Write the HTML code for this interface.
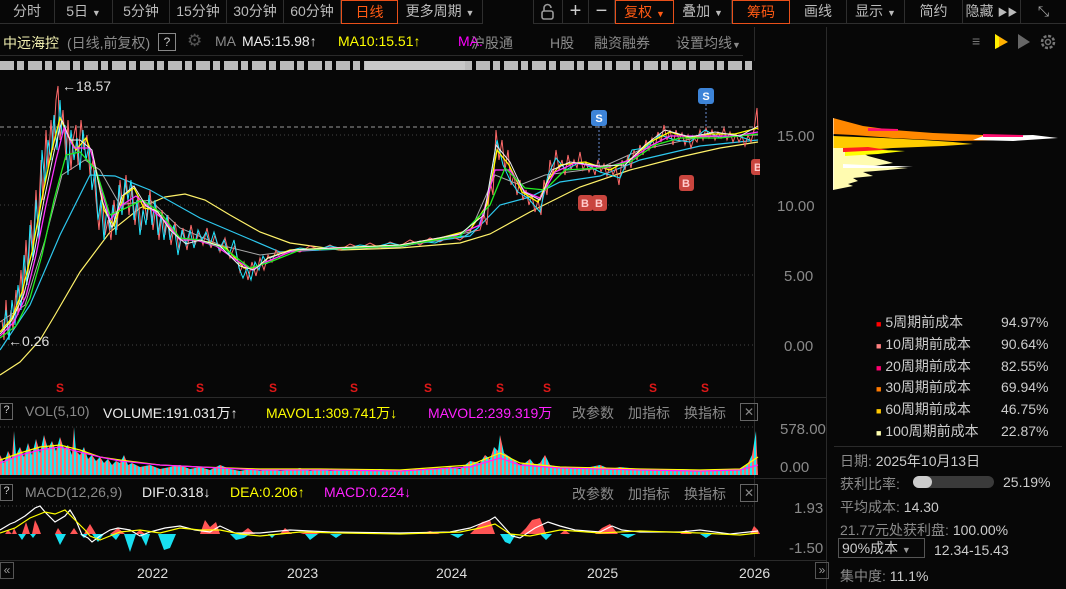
<!DOCTYPE html>
<html><head><meta charset="utf-8"><style>
*{margin:0;padding:0;box-sizing:border-box}
body{width:1066px;height:589px;background:#070707;color:#bbb;font-family:"Liberation Sans","Noto Sans CJK SC",sans-serif;font-size:14px;position:relative;overflow:hidden}
.a{position:absolute;white-space:nowrap}
.tb{position:absolute;top:0;height:24px;border-right:1px solid #2e2e2e;border-bottom:1px solid #2e2e2e;text-align:center;line-height:23px;color:#bbb;font-size:14px}
.on{border:1px solid #e8501a;color:#ff5a14}
.g{color:#8a8a8a}
.rp{color:#ccc;font-size:14px}
.lg div{height:21.8px;line-height:21.8px;overflow:visible}
</style></head><body>
<div class="tb" style="left:0;width:55px">分时</div>
<div class="tb" style="left:55px;width:58px">5日 <span style="font-size:9px">▼</span></div>
<div class="tb" style="left:113px;width:57px">5分钟</div>
<div class="tb" style="left:170px;width:57px">15分钟</div>
<div class="tb" style="left:227px;width:57px">30分钟</div>
<div class="tb" style="left:284px;width:57px">60分钟</div>
<div class="tb on" style="left:341px;width:57px">日线</div>
<div class="tb" style="left:398px;width:85px">更多周期 <span style="font-size:9px">▼</span></div>
<div class="tb" style="left:533px;width:30px;border-left:1px solid #2e2e2e"><svg width="18" height="18" viewBox="0 0 18 18" style="margin-top:3px"><rect x="3" y="8" width="11" height="8" rx="2" fill="none" stroke="#999" stroke-width="1.6"/><path d="M5 8V5a3.5 3.5 0 0 1 7 0" fill="none" stroke="#999" stroke-width="1.6"/></svg></div>
<div class="tb" style="left:563px;width:26px;font-size:20px;color:#ccc">+</div>
<div class="tb" style="left:589px;width:26px;font-size:20px;color:#ccc">−</div>
<div class="tb on" style="left:615px;width:59px">复权 <span style="font-size:9px">▼</span></div>
<div class="tb" style="left:674px;width:58px">叠加 <span style="font-size:9px">▼</span></div>
<div class="tb on" style="left:732px;width:58px">筹码</div>
<div class="tb" style="left:790px;width:57px">画线</div>
<div class="tb" style="left:847px;width:58px">显示 <span style="font-size:9px">▼</span></div>
<div class="tb" style="left:905px;width:58px">简约</div>
<div class="tb" style="left:963px;width:58px">隐藏 <span style="font-size:10px">▶▶</span></div>
<div class="tb" style="left:1021px;width:45px;border-right:none;color:#aaa">⤡</div>

<div class="a" style="left:3px;top:33px;color:#f2f0b0">中远海控</div>
<div class="a g" style="left:67px;top:33px">(日线,前复权)</div>
<div class="a" style="left:158px;top:33px;width:18px;height:18px;border:1px solid #888;color:#ccc;font-size:12px;text-align:center;line-height:16px">?</div>
<div class="a" style="left:187px;top:31px;color:#555;font-size:17px">⚙</div>
<div class="a g" style="left:215px;top:33px">MA</div>
<div class="a" style="left:242px;top:33px;color:#eee">MA5:15.98↑</div>
<div class="a" style="left:338px;top:33px;color:#ffff00">MA10:15.51↑</div>
<div class="a" style="left:458px;top:33px;color:#ff00ff">MA.</div>
<div class="a g" style="left:471px;top:33px">沪股通</div>
<div class="a g" style="left:550px;top:33px">H股</div>
<div class="a g" style="left:594px;top:33px">融资融券</div>
<div class="a g" style="left:676px;top:33px">设置均线<span style="font-size:9px">▼</span></div>
<div class="a" style="left:0;top:55px;width:743px;height:1px;background:#2a2a2a"></div>
<div class="a" style="left:754px;top:27px;width:1px;height:530px;background:#2a2a2a"></div>
<div class="a" style="left:826px;top:27px;width:1px;height:562px;background:#2a2a2a"></div>
<div class="a" style="left:0;top:61px;width:755px;height:9px;background:repeating-linear-gradient(90deg,#bbb 0 14px,#070707 14px 17px,#bbb 17px 24px,#070707 24px 28px)"></div>
<div class="a" style="left:365px;top:61px;width:100px;height:9px;background:#c8c8c8"></div>
<div class="a" style="left:972px;top:33px;color:#777;font-size:14px">≡</div>
<svg class="a" style="left:990px;top:31px" width="70" height="20"><polygon points="5,3 18,11 5,18" fill="#ffb000"/><polygon points="5,3 9,6 9,16 5,18" fill="#ffee00"/><polygon points="28,3 40,11 28,18" fill="#666"/><circle cx="58" cy="11" r="6" fill="none" stroke="#777" stroke-width="2.5" stroke-dasharray="3 1.7"/><circle cx="58" cy="11" r="2.5" fill="none" stroke="#777" stroke-width="1.5"/></svg>

<svg class="a" style="left:0;top:75px" width="760" height="320" viewBox="0 75 760 320">
<g stroke="#444" stroke-dasharray="1 3"><line x1="0" y1="135" x2="754" y2="135"/><line x1="0" y1="205" x2="754" y2="205"/><line x1="0" y1="275" x2="754" y2="275"/><line x1="0" y1="345" x2="754" y2="345"/></g>
<line x1="0" y1="127" x2="754" y2="127" stroke="#999" stroke-dasharray="4 3"/>
<polyline fill="none" stroke="#fff26a" stroke-width="1.2" points="0,375 20,362 40,340 55,315 80,272 110,232 140,208 165,197 185,194 205,200 230,215 260,232 290,243 340,250 400,248 460,243 490,234 530,212 580,187 630,170 680,157 720,148 758,142"/>
<polyline fill="none" stroke="#2ec8ee" stroke-width="1.2" points="0,350 30,305 60,235 90,175 115,176 150,190 200,218 240,235 280,252 320,250 400,246 470,236 500,205 530,197 560,182 600,176 640,160 700,146 758,140"/>
<polyline fill="none" stroke="#aaa" stroke-width="1" points="0,322 25,305 45,240 62,175 85,160 100,170 120,205 150,200 180,228 220,245 260,255 300,250 400,247 470,232 495,175 520,185 545,175 600,168 640,150 700,137 758,135"/>
<polyline fill="none" stroke="#ff6a6a" stroke-width="1" points="2,320 4,340 6,300 8,335 11,310 13,330 16,290 18,315 21,270 23,300 26,240 28,275 31,220 33,250 36,190 38,230 41,160 43,200 46,130 48,170 51,120 53,150 56,100 58,86 60,140 63,110 66,160 68,120 71,170 73,140 76,125 78,165 81,120 84,150 87,135 90,175 93,160 96,200 99,230 102,190 105,235 108,220 111,240 114,200 117,230 120,180 123,210 126,175 129,215 132,185 135,225 138,195 141,230 144,200 147,220 150,190 153,230 156,205 159,240 162,210 165,235 168,215 171,245 175,222 179,250 183,228 187,250 191,225 195,245 199,232 203,245 207,228 211,248 215,235 220,252 225,238 230,258 235,245 240,272 244,262 248,280 252,262 256,276 260,258 264,270 268,255 272,262 276,250 280,258"/>
<polyline fill="none" stroke="#22e6ff" stroke-width="1" points="3,330 6,310 9,340 12,300 15,325 18,285 21,310 24,255 27,285 30,225 33,260 36,200 39,240 42,150 45,185 48,140 51,160 54,115 57,150 60,100 62,135 65,125 68,175 71,130 74,160 77,138 80,170 83,130 86,160 89,145 92,190 95,170 98,220 101,200 104,240 107,205 110,230 113,205 116,235 119,185 122,215 125,180 128,200 131,180 134,220 137,200 140,235 143,210 146,225 149,195 152,225 155,200 158,235 161,215 164,240 167,215 170,240 174,225 178,255 182,230 186,245 190,230 194,248 198,230 202,240 206,232 210,245 214,232 219,250 224,240 229,255 234,240 239,268 243,278 247,268 251,280 255,262 259,270 263,256 267,264"/>
<polyline fill="none" stroke="#ff6a6a" stroke-width="1" points="280,256 290,250 300,252 310,246 320,250 330,245 340,250 350,244 360,248 370,243 380,248 390,242 400,246 410,240 420,245 430,238 440,242 450,236 460,240 470,232 480,230 484,215 487,225 490,180 493,195 496,130 499,160 502,140 505,170 508,150 511,185 514,175 517,195 520,180 523,200 526,190 529,205 532,195 535,212 538,200 541,215 544,180 547,195 550,160 553,175 556,150 559,170 562,160 565,175 568,155 571,170 574,160 577,168 580,152 583,170 586,162 589,172 592,165 595,175 598,160 601,172 604,164 607,176 610,165 613,175 616,168 619,185 622,160 625,170 628,155 631,168 634,150 637,160 640,145 643,155 646,140 649,150 652,138 655,148 658,132 661,142 664,125 667,140 670,130 673,145 676,130 679,140 682,133 685,145 688,135 691,148 694,138 697,142 700,130 703,140 706,128 709,138 712,130 715,140 718,132 721,138 724,128 727,140 730,132 733,142 736,134 739,142 742,136 745,146 748,135 751,142 754,130 757,108 758,130"/>
<polyline fill="none" stroke="#22e6ff" stroke-width="1" points="270,258 285,252 300,248 315,250 330,246 345,249 360,245 375,247 390,243 405,246 420,241 435,243 450,237 465,236 478,228 486,205 492,170 497,140 503,165 510,180 518,192 528,198 540,212 548,175 556,158 566,170 580,162 600,172 620,178 632,150 645,148 660,135 675,140 690,142 705,130 720,138 735,135 750,140"/>
<g fill="none" stroke-width="1.3">
<polyline stroke="#ffff00" points="0,332 12,318 22,292 32,252 42,198 52,150 60,118 68,135 76,150 86,138 94,160 104,210 114,226 124,195 134,188 144,208 156,210 168,226 180,240 192,240 208,242 226,248 244,268 256,268 268,258 290,250 330,248 400,245 440,238 470,230 487,205 497,150 509,165 522,192 538,202 548,180 560,165 585,162 610,170 632,158 650,142 670,132 690,138 710,134 735,134 758,128"/>
<polyline stroke="#ff33ff" points="0,336 14,322 26,296 36,255 46,205 56,160 64,128 74,148 90,148 100,185 110,220 122,205 136,196 150,208 166,222 180,240 196,240 216,246 236,260 252,270 266,262 290,252 330,248 400,246 450,238 480,225 495,170 510,170 525,192 540,198 555,172 575,163 605,168 630,160 650,146 670,136 700,136 735,136 758,132"/>
<polyline stroke="#22ee22" points="0,338 16,326 30,298 42,255 54,200 66,155 80,152 96,170 110,215 126,208 142,200 160,212 180,238 200,240 224,248 250,268 270,262 300,250 400,246 460,236 490,205 505,168 525,188 545,190 565,170 600,168 630,162 655,145 680,138 720,138 758,134"/>
<polyline stroke="#eee" stroke-width="1" points="0,334 12,320 24,294 34,254 44,200 54,152 62,120 70,140 80,140 92,150 102,200 112,228 122,196 134,186 146,206 158,212 170,230 186,244 200,240 220,246 240,266 254,270 268,258 292,250 400,245 460,234 484,215 496,145 510,162 524,192 540,200 552,170 570,162 600,166 625,165 645,145 665,130 690,137 715,132 740,136 758,126"/>
</g>
<text x="62" y="91" fill="#ddd" font-size="14" font-family="Liberation Sans">←18.57</text>
<text x="8" y="346" fill="#ddd" font-size="14" font-family="Liberation Sans">←0.26</text>
<g fill="#e01818" font-size="12" font-weight="bold" font-family="Liberation Sans"><text x="56" y="392">S</text><text x="196" y="392">S</text><text x="269" y="392">S</text><text x="350" y="392">S</text><text x="424" y="392">S</text><text x="496" y="392">S</text><text x="543" y="392">S</text><text x="649" y="392">S</text><text x="701" y="392">S</text></g>
<g stroke="#6a8ed0" stroke-dasharray="2 2"><line x1="599" y1="126" x2="599" y2="165"/><line x1="706" y1="104" x2="706" y2="128"/></g>
<g font-size="11" font-weight="bold" font-family="Liberation Sans" text-anchor="middle">
<rect x="591" y="110" width="16" height="16" rx="3" fill="#3d84d8"/><text x="599" y="122" fill="#fff">S</text>
<rect x="698" y="88" width="16" height="16" rx="3" fill="#3d84d8"/><text x="706" y="100" fill="#fff">S</text>
<rect x="578" y="195" width="15" height="16" rx="3" fill="#c9453e"/><text x="585" y="207" fill="#fcc">B</text>
<rect x="592" y="195" width="15" height="16" rx="3" fill="#c9453e"/><text x="599" y="207" fill="#fcc">B</text>
<rect x="679" y="175" width="15" height="16" rx="3" fill="#c9453e"/><text x="686" y="187" fill="#fcc">B</text>
<rect x="751" y="159" width="15" height="16" rx="3" fill="#c9453e"/><text x="758" y="171" fill="#fcc">B</text>
</g>
</svg>
<div class="a g" style="left:777px;top:128px;font-size:15px">15.00</div>
<div class="a g" style="left:777px;top:198px;font-size:15px">10.00</div>
<div class="a g" style="left:784px;top:268px;font-size:15px">5.00</div>
<div class="a g" style="left:784px;top:338px;font-size:15px">0.00</div>
<svg class="a" style="left:833px;top:118px" width="233" height="75">
<polygon fill="#fffbb0" points="0,28 20,30 35,38 50,42 60,45 40,48 75,50 55,52 30,54 40,58 20,60 25,63 15,66 20,68 10,70 0,72"/>
<polygon fill="#ffcc00" points="0,18 50,20 90,22 120,24 140,26 110,28 60,30 30,32 15,30 0,30"/>
<polygon fill="#ff8800" points="0,0 15,4 30,8 60,12 100,15 150,17 200,19 180,22 120,23 60,20 20,17 0,16"/>
<polygon fill="#fff" points="150,18 200,17 225,20 180,23 140,22"/>
<polygon fill="#ff1070" points="35,10 65,11 65,13 35,13"/><polygon fill="#ff1070" points="150,16 190,17 190,19 150,19"/>
<polygon fill="#ff2020" points="10,30 35,29 55,32 30,34 10,34"/>
<polygon fill="#ffff00" points="12,34 50,32 72,33 45,36 12,38"/>
<polygon fill="#fff" points="10,46 50,48 80,48 50,50 10,50"/>
<line x1="0" y1="0" x2="0" y2="72" stroke="#fff"/>
</svg>
<div class="a rp lg" style="left:876px;top:312px">
<div><span style="color:#f00;font-size:9px">■</span> 5周期前成本</div>
<div><span style="color:#ff8080;font-size:9px">■</span> 10周期前成本</div>
<div><span style="color:#ff0070;font-size:9px">■</span> 20周期前成本</div>
<div><span style="color:#ff7a00;font-size:9px">■</span> 30周期前成本</div>
<div><span style="color:#ffc800;font-size:9px">■</span> 60周期前成本</div>
<div><span style="color:#ffffb0;font-size:9px">■</span> 100周期前成本</div>
</div>
<div class="a rp lg" style="left:1001px;top:312px"><div>94.97%</div><div>90.64%</div><div>82.55%</div><div>69.94%</div><div>46.75%</div><div>22.87%</div></div>
<div class="a" style="left:834px;top:446px;width:228px;height:1px;background:#2a2a2a"></div>
<div class="a rp" style="left:840px;top:451px"><span class="g">日期:</span> 2025年10月13日</div>
<div class="a rp" style="left:840px;top:474px"><span class="g">获利比率:</span></div>
<div class="a" style="left:913px;top:476px;width:81px;height:12px;border-radius:6px;background:#3a3a3a"></div>
<div class="a" style="left:913px;top:476px;width:19px;height:12px;border-radius:6px;background:#ccc"></div>
<div class="a rp" style="left:1003px;top:474px">25.19%</div>
<div class="a rp" style="left:840px;top:497px"><span class="g">平均成本:</span> 14.30</div>
<div class="a rp" style="left:840px;top:520px"><span class="g">21.77元处获利盘:</span> 100.00%</div>
<div class="a rp" style="left:838px;top:538px;width:87px;height:20px;border:1px solid #555;padding-left:3px;line-height:18px">90%成本 <span style="font-size:9px;color:#999">▼</span></div>
<div class="a rp" style="left:934px;top:542px">12.34-15.43</div>
<div class="a rp" style="left:840px;top:566px"><span class="g">集中度:</span> 11.1%</div>

<div class="a" style="left:0;top:397px;width:826px;height:1px;background:#2a2a2a"></div>
<div class="a" style="left:0;top:403px;width:13px;height:17px;border:1px solid #666;color:#ccc;font-size:11px;text-align:center">?</div>
<div class="a g" style="left:25px;top:403px">VOL(5,10)</div>
<div class="a" style="left:103px;top:403px;color:#eee">VOLUME:191.031万↑</div>
<div class="a" style="left:266px;top:403px;color:#ffff00">MAVOL1:309.741万↓</div>
<div class="a" style="left:428px;top:403px;color:#ff22ff">MAVOL2:239.319万</div>
<div class="a g" style="left:572px;top:403px">改参数</div>
<div class="a g" style="left:628px;top:403px">加指标</div>
<div class="a g" style="left:684px;top:403px">换指标</div>
<div class="a" style="left:740px;top:403px;width:18px;height:18px;border:1px solid #666;color:#888;font-size:12px;text-align:center;line-height:16px">✕</div>
<div class="a g" style="left:780px;top:421px;font-size:15px">578.00</div>
<div class="a g" style="left:780px;top:459px;font-size:15px">0.00</div>
<svg class="a" style="left:0;top:425px" width="760" height="52">
<defs><pattern id="st" width="4" height="52" patternUnits="userSpaceOnUse"><rect width="2" height="52" fill="#ff6d6d"/><rect x="2" width="2" height="52" fill="#1ee8f0"/></pattern></defs>
<line x1="0" y1="2" x2="754" y2="2" stroke="#444" stroke-dasharray="1 3"/>
<polygon fill="url(#st)" points="0,50 0,30 4,38 8,26 12,34 14,6 16,30 20,22 24,32 28,18 32,30 36,14 40,28 44,10 48,24 52,16 56,26 60,12 64,24 68,20 72,30 74,2 76,26 80,30 84,22 88,34 92,30 96,36 100,32 104,38 108,34 112,40 116,36 120,38 124,30 128,40 132,38 140,42 150,40 160,44 170,42 180,40 190,44 200,42 210,45 220,40 230,44 240,46 250,44 260,46 270,44 280,46 290,45 300,43 310,46 320,44 330,46 340,45 360,46 380,44 400,46 420,45 440,44 450,42 460,44 470,36 480,38 485,30 490,34 494,22 498,26 500,10 504,28 510,32 515,36 520,40 525,38 530,34 535,40 540,38 545,30 550,40 560,42 580,44 600,40 610,44 620,42 640,44 660,45 680,44 700,45 720,44 740,44 748,38 752,30 756,6 758,50"/>
<polyline fill="none" stroke="#ffff00" stroke-width="1.2" points="0,35 20,28 40,22 60,20 80,25 100,32 120,35 160,40 200,42 260,44 320,44 400,45 470,40 500,28 520,38 560,42 640,44 700,45 740,44 758,32"/>
<polyline fill="none" stroke="#ff22ff" stroke-width="1.2" points="0,38 20,30 40,25 60,22 80,27 100,32 120,36 160,40 200,42 260,45 320,45 400,46 470,42 500,33 520,40 560,43 640,45 700,46 740,45 758,40"/>
</svg>
<div class="a" style="left:0;top:478px;width:826px;height:1px;background:#2a2a2a"></div>
<div class="a" style="left:0;top:484px;width:13px;height:17px;border:1px solid #666;color:#ccc;font-size:11px;text-align:center">?</div>
<div class="a g" style="left:25px;top:484px">MACD(12,26,9)</div>
<div class="a" style="left:142px;top:484px;color:#eee">DIF:0.318↓</div>
<div class="a" style="left:230px;top:484px;color:#ffff00">DEA:0.206↑</div>
<div class="a" style="left:324px;top:484px;color:#ff22ff">MACD:0.224↓</div>
<div class="a g" style="left:572px;top:484px">改参数</div>
<div class="a g" style="left:628px;top:484px">加指标</div>
<div class="a g" style="left:684px;top:484px">换指标</div>
<div class="a" style="left:740px;top:484px;width:18px;height:18px;border:1px solid #666;color:#888;font-size:12px;text-align:center;line-height:16px">✕</div>
<div class="a g" style="left:794px;top:500px;font-size:15px">1.93</div>
<div class="a g" style="left:789px;top:540px;font-size:15px">-1.50</div>
<svg class="a" style="left:0;top:500px" width="760" height="60">
<line x1="0" y1="6" x2="754" y2="6" stroke="#444" stroke-dasharray="1 3"/>
<polygon fill="#ff5555" points="5,34 8,30 12,34 14,28 17,34 22,34 26,22 30,34 32,34 35,20 38,26 41,34 55,34 58,28 62,34 70,34 74,28 78,34 84,34 90,24 96,34 110,34 118,28 125,34 135,34 140,30 145,34 200,34 205,20 210,27 216,22 220,34 240,34 248,28 255,34 280,34 285,28 292,34 300,34 310,31 320,34 420,34 430,31 440,34 470,34 476,28 482,22 490,20 495,34 520,34 526,28 532,20 540,18 546,34 560,34 565,30 570,34 595,34 602,28 610,24 618,34 680,34 686,30 692,34 750,34 754,26 758,30 760,34"/>
<polygon fill="#18dff0" points="18,34 22,40 26,34 30,34 33,38 36,34 55,34 60,45 66,34 80,34 84,38 88,34 92,34 98,42 104,34 110,34 116,40 120,34 124,34 130,52 136,34 140,34 146,46 150,34 158,34 164,50 170,48 176,34 230,34 236,40 244,38 250,34 268,34 272,38 276,34 305,34 310,40 318,34 330,34 336,38 342,34 450,34 458,38 464,34 500,34 505,42 510,44 516,34 540,34 546,40 552,34 620,34 628,38 636,34 700,34 706,38 712,34"/>
<polyline fill="none" stroke="#fff" stroke-width="1.2" points="0,30 10,24 15,22 25,16 35,8 40,6 45,12 55,22 65,16 70,10 75,18 82,35 88,38 92,42 100,36 110,30 118,28 130,30 140,36 150,32 165,28 180,26 195,30 210,32 220,26 235,33 260,33 290,30 330,32 400,33 450,32 470,28 480,24 490,20 495,17 505,28 512,36 520,38 535,28 548,22 560,26 575,30 600,32 612,26 622,30 640,32 680,32 700,30 730,34 758,31"/>
<polyline fill="none" stroke="#ffff00" stroke-width="1.2" points="0,33 15,28 30,18 45,12 55,14 65,10 75,20 85,30 90,36 100,40 120,32 140,30 160,33 180,28 200,30 220,30 240,34 260,36 300,32 340,33 400,34 460,32 480,28 495,24 510,34 530,36 560,30 600,33 640,31 700,33 740,35 758,33"/>
</svg>
<div class="a" style="left:0;top:560px;width:826px;height:1px;background:#2a2a2a"></div>
<div class="a" style="left:0;top:562px;width:14px;height:17px;border:1px solid #555;color:#999;font-size:12px;text-align:center;line-height:15px">«</div>
<div class="a" style="left:815px;top:562px;width:14px;height:17px;border:1px solid #555;color:#999;font-size:12px;text-align:center;line-height:15px">»</div>
<div class="a" style="left:137px;top:565px;color:#ddd">2022</div>
<div class="a" style="left:287px;top:565px;color:#ddd">2023</div>
<div class="a" style="left:436px;top:565px;color:#ddd">2024</div>
<div class="a" style="left:587px;top:565px;color:#ddd">2025</div>
<div class="a" style="left:739px;top:565px;color:#ddd">2026</div>
</body></html>
